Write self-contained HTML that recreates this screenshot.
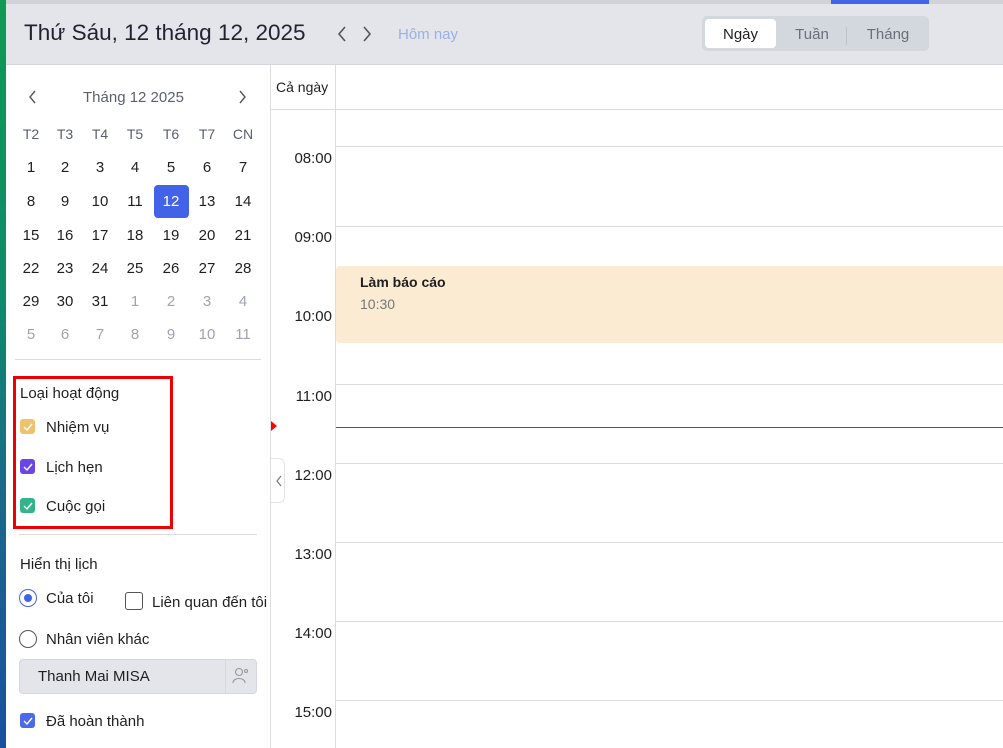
<!DOCTYPE html>
<html><head><meta charset="utf-8"><style>
*{box-sizing:border-box;margin:0;padding:0}
body{width:1003px;height:748px;overflow:hidden;position:relative;background:#fff;font-family:"Liberation Sans",sans-serif;color:#1f1f1f}
.a{position:absolute}
.strip{left:0;top:0;width:6px;height:748px;background:linear-gradient(#0f9a55,#0d8a6a 40%,#1a6a8a 65%,#1a4fa0)}
.hdr{left:6px;top:0;width:997px;height:65px;background:#e3e5ea;border-bottom:1px solid #d3d6dd}
.top{left:6px;top:0;width:997px;height:4px;background:#d0d2d7}
.cal{font-size:15px;text-align:center;width:34px;line-height:20px}
.g{color:#9ea3ad}
.hl{left:336px;width:667px;height:1px;background:#dcdcdc}
.tm{left:270px;width:62px;text-align:right;font-size:15px;color:#1f1f1f}
.cb{width:15px;height:15px;border-radius:3px}
.lbl{font-size:15px}
</style></head><body>
<div class="a strip"></div>
<div class="a hdr"></div>
<div class="a top"></div>
<div class="a" style="left:831px;top:0;width:98px;height:4px;background:#4262e8"></div>
<div class="a" style="left:24px;top:20px;font-size:22.5px;color:#1f2330">Thứ Sáu, 12 tháng 12, 2025</div>
<svg class="a" style="left:334px;top:25px" width="44" height="18"><path d="M11 2 L5 9 L11 16" stroke="#555" stroke-width="1.6" fill="none"/><path d="M30 2 L36 9 L30 16" stroke="#555" stroke-width="1.6" fill="none"/></svg>
<div class="a" style="left:398px;top:26px;font-size:15px;color:#9ab0e6">Hôm nay</div>
<div class="a" style="left:702px;top:16px;width:227px;height:35px;background:#d3d7de;border-radius:5px"></div>
<div class="a" style="left:705px;top:19px;width:71px;height:29px;background:#fff;border-radius:4px"></div>
<div class="a" style="left:705px;top:26px;width:71px;text-align:center;font-size:15px">Ngày</div>
<div class="a" style="left:782px;top:26px;width:60px;text-align:center;font-size:15px;color:#6a6f7a">Tuần</div>
<div class="a" style="left:846px;top:27px;width:1px;height:18px;background:#bfc3ca"></div>
<div class="a" style="left:852px;top:26px;width:72px;text-align:center;font-size:15px;color:#6a6f7a">Tháng</div>

<div class="a" style="left:270px;top:65px;width:1px;height:683px;background:#dcdcdc"></div>
<svg class="a" style="left:25px;top:89px" width="230" height="16"><path d="M10 2 L5 8 L10 14" stroke="#555" stroke-width="1.4" fill="none"/><path d="M215 2 L220 8 L215 14" stroke="#555" stroke-width="1.4" fill="none"/></svg>
<div class="a" style="left:83px;top:89px;font-size:15px;color:#5a5f6b">Tháng 12 2025</div>
<div class="a" style="left:154px;top:185px;width:35px;height:33px;background:#4262e8;border-radius:4px"></div>
<div id="cal"></div>
<div class="a" style="left:15px;top:359px;width:246px;height:1px;background:#dcdcdc"></div>
<div class="a" style="left:13px;top:376px;width:160px;height:153px;border:3px solid #ee0000"></div>
<div class="a lbl" style="left:20px;top:385px">Loại hoạt động</div>
<div class="a cb" style="left:20px;top:419px;background:#efc36d"></div><div class="a lbl" style="left:46px;top:419px">Nhiệm vụ</div>
<div class="a cb" style="left:20px;top:459px;background:#6a45e8"></div><div class="a lbl" style="left:46px;top:459px">Lịch hẹn</div>
<div class="a cb" style="left:20px;top:498px;background:#33b48a"></div><div class="a lbl" style="left:46px;top:498px">Cuộc gọi</div>
<svg class="a" style="left:20px;top:419px" width="16" height="95"><g stroke="#fff" stroke-width="1.4" fill="none"><path d="M4 8 L7 11 L12 5"/><path d="M4 48 L7 51 L12 45"/><path d="M4 87 L7 90 L12 84"/></g></svg>
<div class="a" style="left:19px;top:534px;width:238px;height:1px;background:#dcdcdc"></div>
<div class="a lbl" style="left:20px;top:556px">Hiển thị lịch</div>
<div class="a" style="left:19px;top:589px;width:18px;height:18px;border:1.5px solid #4262e8;border-radius:50%"></div>
<div class="a" style="left:24px;top:594px;width:8px;height:8px;background:#4262e8;border-radius:50%"></div>
<div class="a lbl" style="left:46px;top:590px">Của tôi</div>
<div class="a" style="left:125px;top:592px;width:18px;height:18px;border:1.3px solid #555;border-radius:3px"></div>
<div class="a lbl" style="left:152px;top:594px;white-space:nowrap">Liên quan đến tôi</div>
<div class="a" style="left:19px;top:630px;width:18px;height:18px;border:1.3px solid #555;border-radius:50%"></div>
<div class="a lbl" style="left:46px;top:631px">Nhân viên khác</div>
<div class="a" style="left:19px;top:659px;width:238px;height:35px;background:#e3e5ea;border:1px solid #d6d8dd;border-radius:4px"></div>
<div class="a" style="left:225px;top:660px;width:1px;height:33px;background:#d6d8dd"></div>
<svg class="a" style="left:231px;top:666px" width="20" height="20"><g stroke="#999" stroke-width="1.1" fill="none"><circle cx="8" cy="6" r="3.5"/><path d="M2 17 C2 11 14 11 14 17"/><circle cx="15" cy="5" r="1.5"/></g></svg>
<div class="a lbl" style="left:38px;top:668px">Thanh Mai MISA</div>
<div class="a cb" style="left:20px;top:713px;background:#4a6aea"></div>
<svg class="a" style="left:20px;top:713px" width="16" height="16"><path d="M4 8 L7 11 L12 5" stroke="#fff" stroke-width="1.4" fill="none"/></svg>
<div class="a lbl" style="left:46px;top:713px">Đã hoàn thành</div>

<div class="a" style="left:335px;top:65px;width:1px;height:683px;background:#dcdcdc"></div>
<div class="a" style="left:270px;top:109px;width:733px;height:1px;background:#dcdcdc"></div>
<div class="a" style="left:276px;top:79px;font-size:14px">Cả ngày</div>
<div class="a hl" style="top:146px"></div><div class="a tm" style="top:150px">08:00</div>
<div class="a hl" style="top:226px"></div><div class="a tm" style="top:229px">09:00</div>
<div class="a tm" style="top:308px">10:00</div>
<div class="a hl" style="top:384px"></div><div class="a tm" style="top:388px">11:00</div>
<div class="a hl" style="top:463px"></div><div class="a tm" style="top:467px">12:00</div>
<div class="a hl" style="top:542px"></div><div class="a tm" style="top:546px">13:00</div>
<div class="a hl" style="top:621px"></div><div class="a tm" style="top:625px">14:00</div>
<div class="a hl" style="top:700px"></div><div class="a tm" style="top:704px">15:00</div>
<div class="a" style="left:336px;top:266px;width:667px;height:77px;background:#faebd2;border-radius:4px 0 0 4px"></div>
<div class="a" style="left:360px;top:274px;font-size:14px;font-weight:bold">Làm báo cáo</div>
<div class="a" style="left:360px;top:296px;font-size:14px;color:#777">10:30</div>
<div class="a" style="left:336px;top:427px;width:667px;height:1px;background:#555"></div>
<div class="a" style="left:271px;top:421px;width:0;height:0;border-top:5px solid transparent;border-bottom:5px solid transparent;border-left:6px solid #f00"></div>
<div class="a" style="left:271px;top:458px;width:14px;height:45px;background:#fff;border:1px solid #e4e4e4;border-left:none;border-radius:0 6px 6px 0"></div>
<svg class="a" style="left:274px;top:474px" width="10" height="14"><path d="M7 2 L3 7 L7 12" stroke="#777" stroke-width="1.2" fill="none"/></svg>

<script>
var xs=[31,65,100,135,171,207,243],h=["T2","T3","T4","T5","T6","T7","CN"],s="";
function c(x,y,t,cl){s+='<div class="a cal'+(cl?' '+cl:'')+'" style="left:'+(x-17)+'px;top:'+(y-9)+'px">'+t+'</div>';}
h.forEach(function(t,i){s+='<div class="a cal" style="left:'+(xs[i]-17)+'px;top:124px;color:#5a5f6b;font-size:14px">'+t+'</div>'});
var ys=[167,201,235,268,301,334],d=1,n=1;
for(var r=0;r<6;r++)for(var i=0;i<7;i++){if(d<=31){c(xs[i],ys[r],d,d==12?'sel':'');d++}else{c(xs[i],ys[r],n,'g');n++}}
document.getElementById('cal').innerHTML=s;
</script>
<style>.sel{color:#fff}</style>
</body></html>
